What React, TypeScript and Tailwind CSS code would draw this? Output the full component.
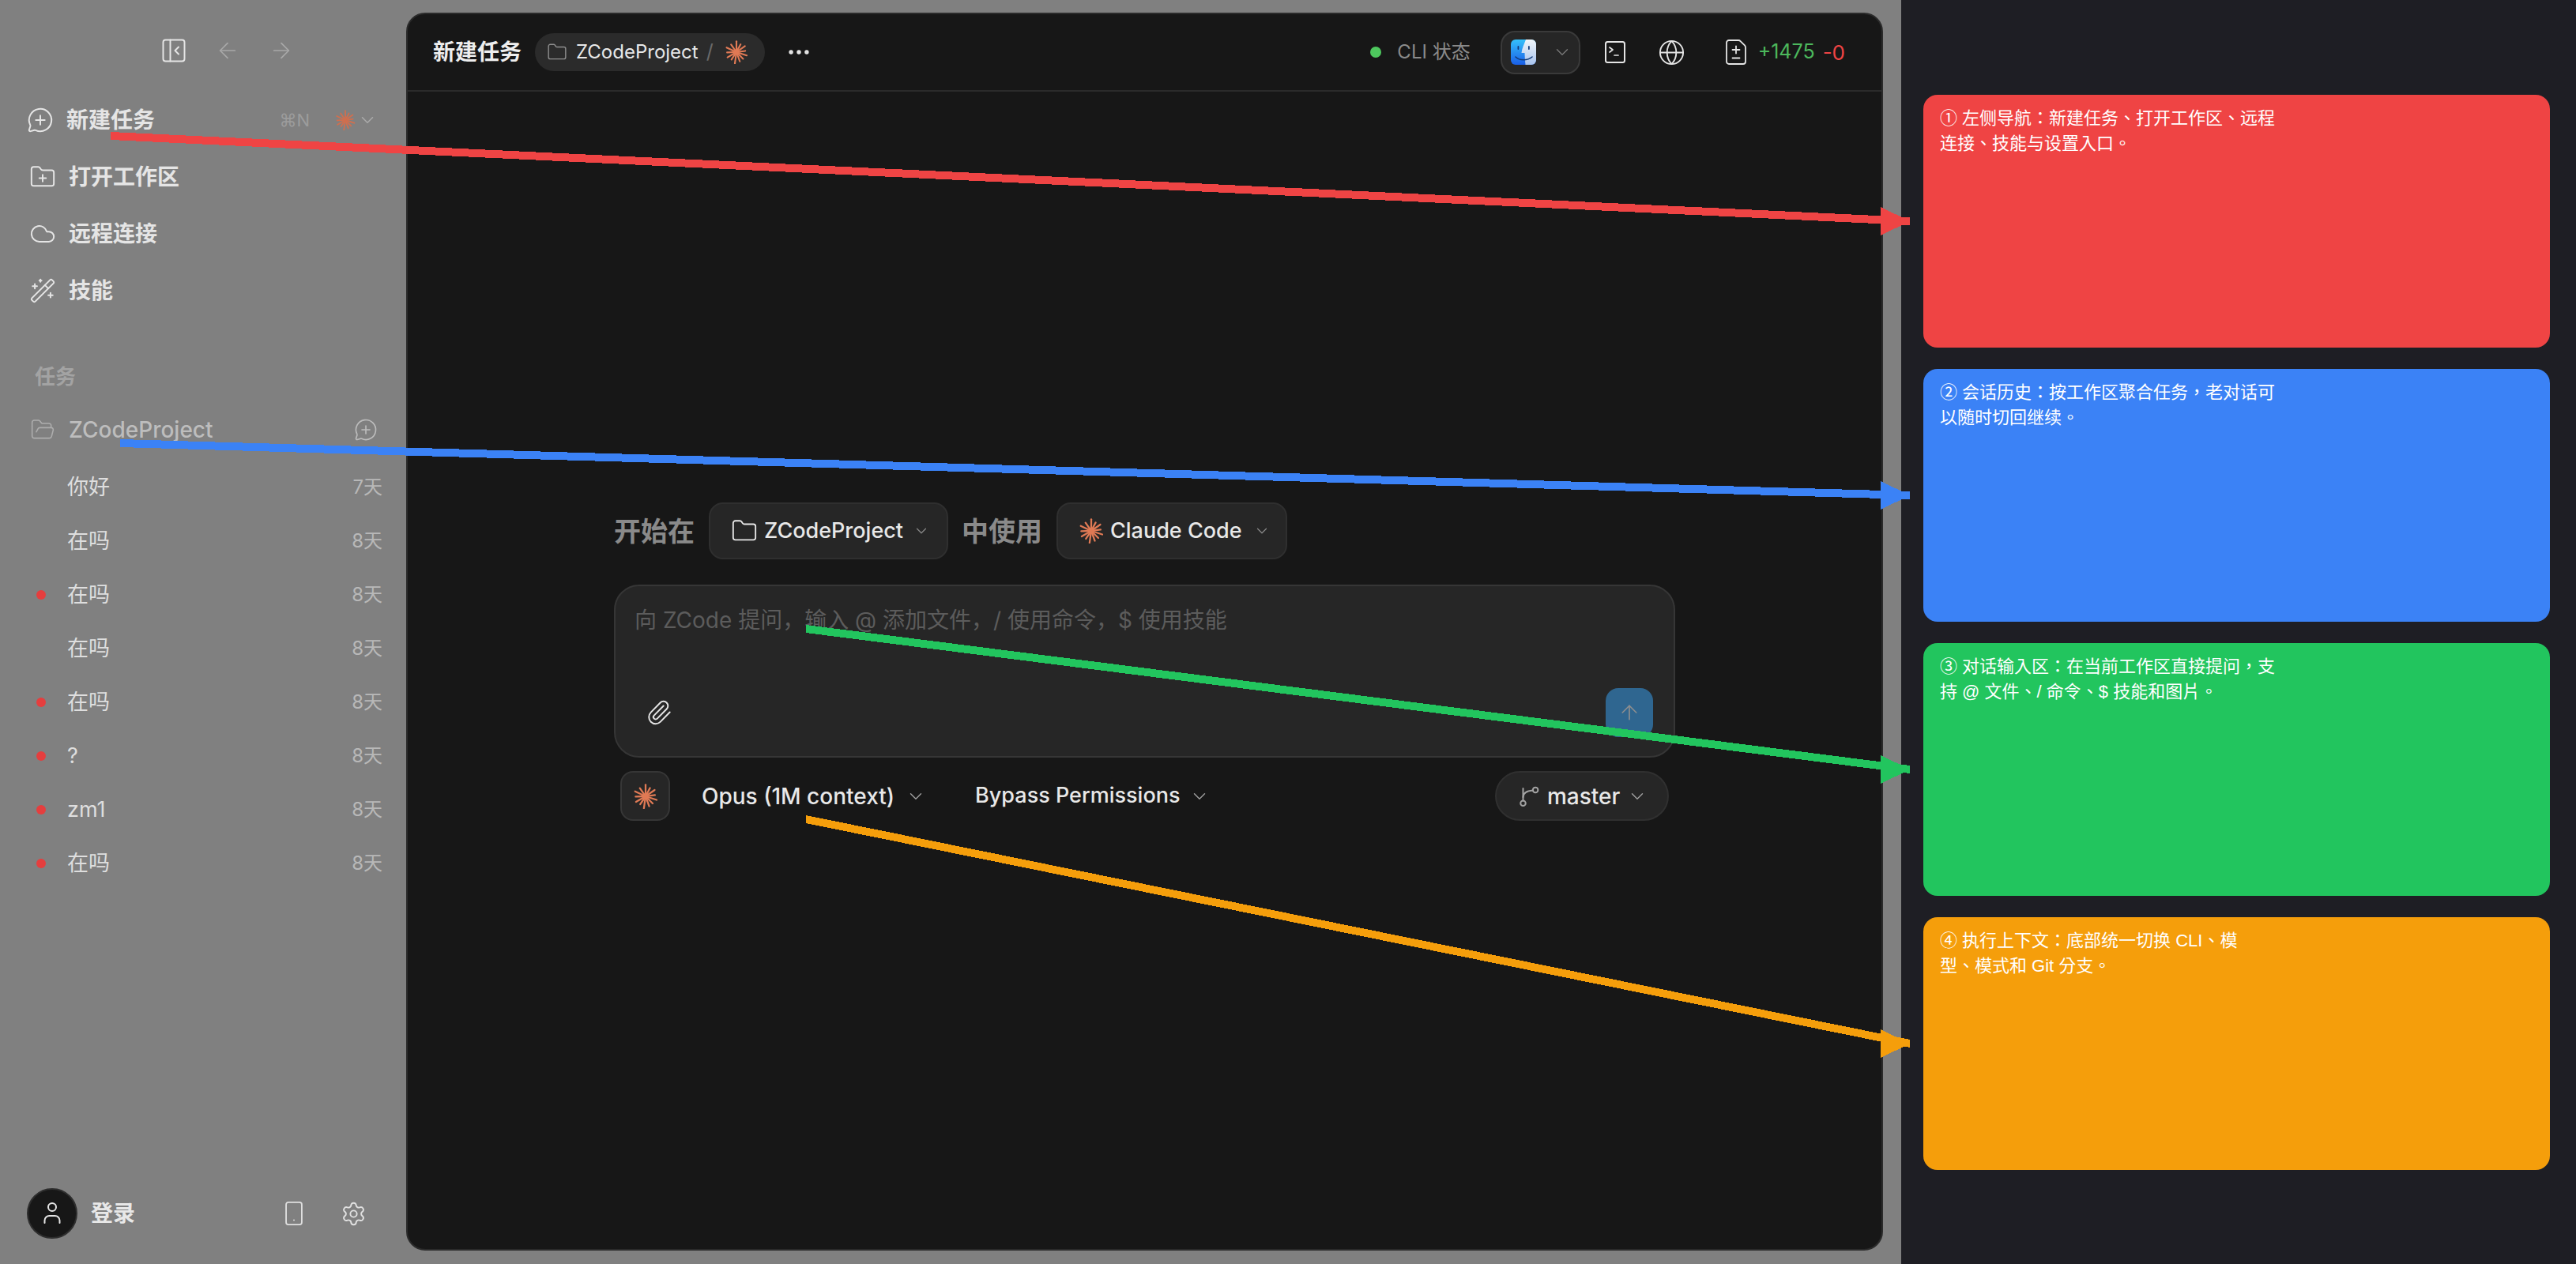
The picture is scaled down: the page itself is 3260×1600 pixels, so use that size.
import React from "react";
import {
  ArrowLeft, ArrowRight, ArrowUp, ChevronDown, Cloud, Ellipsis, FileDiff, Folder, FolderOpen, FolderPlus,
  Globe, MessageCirclePlus, PanelLeftClose, Paperclip, Settings, Smartphone, WandSparkles,
} from "lucide-react";

const RAYS: [number, number][] = [
  [0, 11], [28, 9], [55, 10.5], [82, 9], [108, 11], [135, 9.5], [160, 10], [188, 11.5], [214, 9], [240, 10.5], [268, 9.5], [295, 11], [325, 9.5],
];

function ClaudeMark({ size, color = "#e07a55" }: { size: number; color?: string }) {
  return (
    <svg width={size} height={size} viewBox="0 0 24 24" className="shrink-0">
      {RAYS.map(([a, l], i) => {
        const r = (a * Math.PI) / 180;
        return (
          <line key={i} x1={12} y1={12} x2={12 + l * Math.sin(r)} y2={12 - l * Math.cos(r)} stroke={color} strokeWidth={1.7} strokeLinecap="round" />
        );
      })}
    </svg>
  );
}

function FinderIcon() {
  return (
    <svg width="32" height="32" viewBox="0 0 32 32" className="shrink-0">
      <defs>
        <linearGradient id="fa" x1="0" y1="0" x2="0" y2="1">
          <stop offset="0" stopColor="#35c0fa" />
          <stop offset="1" stopColor="#1a5fe8" />
        </linearGradient>
        <linearGradient id="fb" x1="0" y1="0" x2="0" y2="1">
          <stop offset="0" stopColor="#f2f6fa" />
          <stop offset="1" stopColor="#a8c4ee" />
        </linearGradient>
        <clipPath id="fc">
          <rect x="0" y="0" width="32" height="32" rx="6" />
        </clipPath>
      </defs>
      <g clipPath="url(#fc)">
        <rect width="32" height="32" fill="url(#fa)" />
        <path d="M19 0 C17 6 14 11 13.5 17 L17.5 17 C17.5 22 18 27 18.5 32 L32 32 L32 0 Z" fill="url(#fb)" />
        <path d="M6 22 C11 27 21 27 27 22" fill="none" stroke="#123a78" strokeWidth="1.6" strokeLinecap="round" />
        <rect x="8.5" y="8" width="1.8" height="5" rx="0.9" fill="#123a78" />
        <rect x="22" y="8" width="1.8" height="5" rx="0.9" fill="#123a78" />
      </g>
    </svg>
  );
}

function TerminalIcon() {
  return (
    <svg width="28" height="30" viewBox="0 0 28 30" fill="none" stroke="#e5e5e5" strokeWidth="2" strokeLinecap="round" strokeLinejoin="round" className="shrink-0">
      <rect x="2" y="2" width="24" height="26" rx="2.5" />
      <path d="M7 9l4 3-4 3" strokeWidth="1.7" />
      <path d="M13 19h5" strokeWidth="1.7" />
    </svg>
  );
}

function BranchIcon() {
  return (
    <svg width="30" height="30" viewBox="0 0 24 24" fill="none" stroke="#a3a3a3" strokeWidth="1.6" strokeLinecap="round" className="shrink-0">
      <circle cx="6" cy="19" r="2.6" />
      <circle cx="18.5" cy="5.5" r="2.6" />
      <path d="M6 16.4V4" />
      <path d="M6 13c0-4 3.5-6.5 9.8-7" />
    </svg>
  );
}

function UserIcon() {
  return (
    <svg width="24" height="30" viewBox="0 0 24 30" fill="none" stroke="#e5e5e5" strokeWidth="2" strokeLinecap="round" className="shrink-0">
      <circle cx="12" cy="7" r="5" />
      <path d="M2.5 27v-3a6 6 0 0 1 6-6h7a6 6 0 0 1 6 6v3" />
    </svg>
  );
}

const NAV = [
  { icon: <FolderPlus size={34} strokeWidth={1.4} />, label: "打开工作区" },
  { icon: <Cloud size={34} strokeWidth={1.4} />, label: "远程连接" },
  { icon: <WandSparkles size={34} strokeWidth={1.4} />, label: "技能" },
];

const TASKS = [
  { t: "你好", d: "7天", dot: false },
  { t: "在吗", d: "8天", dot: false },
  { t: "在吗", d: "8天", dot: true },
  { t: "在吗", d: "8天", dot: false },
  { t: "在吗", d: "8天", dot: true },
  { t: "?", d: "8天", dot: true },
  { t: "zm1", d: "8天", dot: true },
  { t: "在吗", d: "8天", dot: true },
];

const CARDS = [
  { bg: "bg-[#ef4444]", a: "① 左侧导航：新建任务、打开工作区、远程", b: "连接、技能与设置入口。" },
  { bg: "bg-[#3b82f6]", a: "② 会话历史：按工作区聚合任务，老对话可", b: "以随时切回继续。" },
  { bg: "bg-[#22c55e]", a: "③ 对话输入区：在当前工作区直接提问，支", b: "持 @ 文件、/ 命令、$ 技能和图片。" },
  { bg: "bg-[#f59e0b]", a: "④ 执行上下文：底部统一切换 CLI、模", b: "型、模式和 Git 分支。" },
];

const ARROWS = [
  { c: "#ef4444", x: 140, y: 172, ty: 280 },
  { c: "#3b82f6", x: 152, y: 561, ty: 627 },
  { c: "#22c55e", x: 1020, y: 796, ty: 974 },
  { c: "#f59e0b", x: 1020, y: 1037, ty: 1321 },
];

function Sidebar() {
  return (
    <aside className="w-[514px] shrink-0 h-full flex flex-col">
      <div className="h-[116px] flex items-start pt-[46px] pl-[202px] text-[#e5e5e5]">
        <PanelLeftClose size={36} strokeWidth={1.3} />
        <ArrowLeft size={32} strokeWidth={1.3} className="ml-[34px] mt-[2px] text-[#a8a8a8]" />
        <ArrowRight size={32} strokeWidth={1.3} className="ml-[36px] mt-[2px] text-[#a8a8a8]" />
      </div>

      <div className="h-[72px] flex items-center pl-[34px] pr-[36px] text-[#e5e5e5]">
        <MessageCirclePlus size={34} strokeWidth={1.4} className="shrink-0" />
        <span className="ml-[16px] text-[28px] font-semibold">新建任务</span>
        <span className="ml-auto text-[22px] text-[#9c9c9c]">⌘N</span>
        <span className="ml-[32px]"><ClaudeMark size={26} color="#cf6f4f" /></span>
        <ChevronDown size={26} strokeWidth={1.4} className="ml-[2px] text-[#aaaaaa]" />
      </div>
      {NAV.map((n) => (
        <div key={n.label} className="h-[72px] flex items-center pl-[37px] text-[#e5e5e5]">
          <span className="shrink-0 w-[34px]">{n.icon}</span>
          <span className="ml-[16px] text-[28px] font-semibold">{n.label}</span>
        </div>
      ))}

      <div className="mt-[44px] h-[56px] flex items-center pl-[44px] text-[26px] font-semibold text-[#a3a3a3]">任务</div>
      <div className="mt-[6px] h-[68px] flex items-center pl-[38px] pr-[36px] text-[#bdbdbd]">
        <FolderOpen size={32} strokeWidth={1.2} className="shrink-0 text-[#adadad]" />
        <span className="ml-[17px] text-[28px] font-medium">ZCodeProject</span>
        <MessageCirclePlus size={30} strokeWidth={1.3} className="ml-auto" />
      </div>

      <div className="mt-[5px]">
        {TASKS.map((t, i) => (
          <div key={i} className="h-[68px] flex items-center pl-[46px] pr-[30px]">
            <span className="w-[12px] h-[12px] shrink-0">
              {t.dot && <span className="block w-[12px] h-[12px] rounded-full bg-[#e53e3e]" />}
            </span>
            <span className="ml-[27px] text-[27px] text-[#dedede]">{t.t}</span>
            <span className="ml-auto text-[24px] text-[#b8b8b8]">{t.d}</span>
          </div>
        ))}
      </div>

      <div className="mt-auto mb-[32px] flex items-center pl-[34px] pr-[50px]">
        <span className="w-[64px] h-[64px] rounded-full bg-[#171717] border-2 border-[#2e2e2e] flex items-center justify-center">
          <UserIcon />
        </span>
        <span className="ml-[17px] text-[28px] font-bold text-[#e8e8e8]">登录</span>
        <Smartphone size={34} strokeWidth={1.3} className="ml-auto text-[#e0e0e0]" />
        <Settings size={33} strokeWidth={1.4} className="ml-[42px] text-[#e0e0e0]" />
      </div>
    </aside>
  );
}

function Chip({ children, className = "" }: { children: React.ReactNode; className?: string }) {
  return <div className={`h-[72px] flex items-center rounded-[18px] bg-[#262626] border-2 border-[#2f2f2f] ${className}`}>{children}</div>;
}

function Main() {
  return (
    <main className="flex-1 mt-[16px] mb-[17px] mr-[23px] rounded-[24px] bg-[#171717] border-2 border-[#2b2b2b] flex flex-col overflow-hidden">
      <header className="h-[96px] shrink-0 border-b-2 border-[#2b2b2b] flex items-center pl-[32px] pr-[46px] box-content">
        <span className="text-[28px] font-bold text-[#eeeeee]">新建任务</span>
        <div className="ml-[17px] h-[48px] w-[291px] rounded-full bg-[#2b2b2b] flex items-center pl-[15px]">
          <Folder size={26} strokeWidth={1.3} className="text-[#8f8f8f] shrink-0" />
          <span className="ml-[11px] text-[24px] text-[#e8e8e8]">ZCodeProject</span>
          <span className="ml-[10px] text-[25px] text-[#6a6a6a]">/</span>
          <span className="ml-[14px]"><ClaudeMark size={30} /></span>
        </div>
        <Ellipsis size={34} strokeWidth={1.8} className="ml-[26px] text-[#e5e5e5]" />

        <span className="ml-auto w-[14px] h-[14px] rounded-full bg-[#4ec85e]" />
        <span className="ml-[20px] text-[24px] text-[#8a8a8a]">CLI 状态</span>
        <div className="ml-[38px] w-[101px] h-[55px] rounded-[18px] bg-[#262626] border-2 border-[#3a3a3a] flex items-center pl-[11px]">
          <FinderIcon />
          <ChevronDown size={26} strokeWidth={1.3} className="ml-[20px] text-[#777777]" />
        </div>
        <span className="ml-[30px]"><TerminalIcon /></span>
        <Globe size={35} strokeWidth={1.3} className="ml-[40px] text-[#e5e5e5]" />
        <FileDiff size={36} strokeWidth={1.2} className="ml-[46px] text-[#e5e5e5]" />
        <span className="ml-[10px] text-[25px] text-[#4cb85c]">+1475</span>
        <span className="ml-[10px] text-[26px] text-[#ef4444]">-0</span>
      </header>

      <div className="w-[1343px] mx-auto pt-[520px] flex flex-col">
        <div className="flex items-center">
          <span className="text-[34px] font-semibold text-[#8a8a8a]">开始在</span>
          <Chip className="ml-[18px] w-[303px] pl-[26px] text-[#e8e8e8]">
            <Folder size={34} strokeWidth={1.3} className="shrink-0" />
            <span className="ml-[8px] text-[27px] font-medium">ZCodeProject</span>
            <ChevronDown size={22} strokeWidth={1.3} className="ml-[12px] text-[#8a8a8a]" />
          </Chip>
          <span className="ml-[17px] text-[34px] font-semibold text-[#8a8a8a]">中使用</span>
          <Chip className="ml-[18px] w-[292px] pl-[26px] text-[#e8e8e8]">
            <ClaudeMark size={32} />
            <span className="ml-[8px] text-[27px] font-medium">Claude Code</span>
            <ChevronDown size={22} strokeWidth={1.3} className="ml-[14px] text-[#8a8a8a]" />
          </Chip>
        </div>

        <div className="mt-[32px] h-[219px] rounded-[32px] bg-[#262626] border-2 border-[#363636] flex flex-col pl-[24px] pr-[26px]">
          <p className="mt-[22px] text-[28px] text-[#5c5c5c]">向 ZCode 提问，输入 @ 添加文件，/ 使用命令，$ 使用技能</p>
          <div className="mt-auto mb-[24px] flex items-center justify-between">
            <Paperclip size={34} strokeWidth={1.4} className="text-[#e5e5e5] ml-[14px]" />
            <span className="w-[60px] h-[62px] rounded-[16px] bg-[#2f6690] flex items-center justify-center">
              <ArrowUp size={30} strokeWidth={1.3} className="text-[#8f8f8f]" />
            </span>
          </div>
        </div>

        <div className="mt-[17px] flex items-center pl-[8px] pr-[8px]">
          <span className="w-[63px] h-[63px] rounded-[16px] bg-[#262626] border-2 border-[#363636] flex items-center justify-center">
            <ClaudeMark size={32} />
          </span>
          <span className="ml-[40px] text-[28px] font-medium text-[#e8e8e8]">Opus (1M context)</span>
          <ChevronDown size={26} strokeWidth={1.3} className="ml-[14px] text-[#a0a0a0]" />
          <span className="ml-[62px] text-[27px] font-medium text-[#e8e8e8]">Bypass Permissions</span>
          <ChevronDown size={26} strokeWidth={1.3} className="ml-[12px] text-[#a0a0a0]" />
          <div className="ml-auto w-[220px] h-[63px] rounded-full bg-[#262626] border-2 border-[#303030] flex items-center pl-[26px]">
            <BranchIcon />
            <span className="ml-[8px] text-[28px] font-medium text-[#e8e8e8]">master</span>
            <ChevronDown size={26} strokeWidth={1.3} className="ml-[9px] text-[#a0a0a0]" />
          </div>
        </div>
      </div>
    </main>
  );
}

export default function App() {
  return (
    <div className="relative w-[3260px] h-[1600px] overflow-hidden flex font-['Inter','Noto_Sans_CJK_SC',sans-serif]">
      <div className="w-[2406px] shrink-0 h-full bg-[#808080] flex">
        <Sidebar />
        <Main />
      </div>
      <div className="flex-1 h-full bg-[#1e1e24] flex flex-col gap-[27px] pt-[120px] pl-[28px] pr-[33px] font-['Liberation_Sans','Noto_Sans_CJK_TC',sans-serif]">
        {CARDS.map((c) => (
          <div key={c.a} className={`h-[320px] rounded-[18px] ${c.bg} px-[21px] pt-[14px] text-[22px] leading-[32px] text-white`}>
            {c.a}
            <br />
            {c.b}
          </div>
        ))}
      </div>

      <svg className="absolute inset-0 pointer-events-none" width="3260" height="1600" viewBox="0 0 3260 1600" shapeRendering="crispEdges">
        {ARROWS.map((a) => (
          <g key={a.c} fill={a.c}>
            <polygon points={`${a.x},${a.y - 5} 2417,${a.ty - 5} 2417,${a.ty + 5} ${a.x},${a.y + 5}`} />
            <polygon points={`2380,${a.ty - 18} 2417,${a.ty} 2380,${a.ty + 18}`} />
          </g>
        ))}
      </svg>
    </div>
  );
}
